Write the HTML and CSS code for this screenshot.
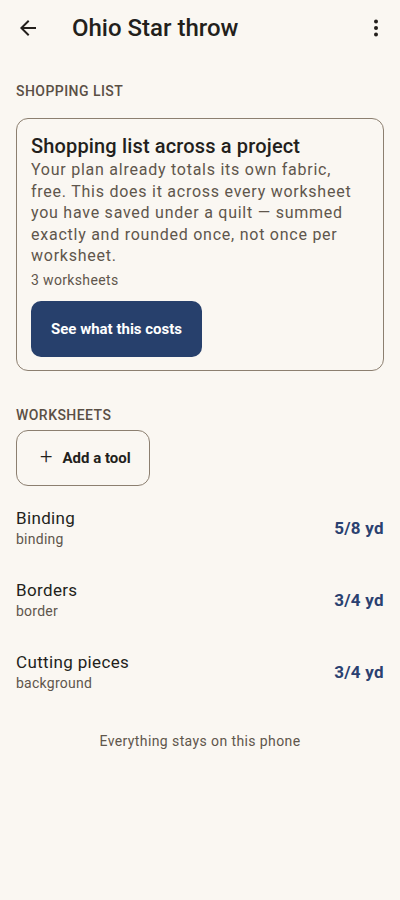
FILE: index.html
```html
<!DOCTYPE html>
<html lang="en">
<head>
<meta charset="utf-8">
<link rel="stylesheet" href="styles.css">
</head>
<body>
<div class="app">
  <header class="topbar">
    <button class="iconbtn" aria-label="Back">
      <svg width="24" height="24" viewBox="0 0 24 24"><path d="M20 11H7.83l5.59-5.59L12 4l-8 8 8 8 1.41-1.41L7.83 13H20v-2z" fill="#231f1c"/></svg>
    </button>
    <h1 class="title">Ohio Star throw</h1>
    <button class="iconbtn more" aria-label="More">
      <svg width="24" height="24" viewBox="0 0 24 24"><circle cx="12" cy="5.5" r="2" fill="#231f1c"/><circle cx="12" cy="12" r="2" fill="#231f1c"/><circle cx="12" cy="18.5" r="2" fill="#231f1c"/></svg>
    </button>
  </header>

  <main class="content">
    <h2 class="section">SHOPPING LIST</h2>
    <section class="card">
      <h3 class="card-title">Shopping list across a project</h3>
      <p class="card-body">Your plan already totals its own fabric, free. This does it across every worksheet you have saved under a quilt — summed exactly and rounded once, not once per worksheet.</p>
      <p class="card-meta">3 worksheets</p>
      <button class="primary">See what this costs</button>
    </section>

    <h2 class="section ws">WORKSHEETS</h2>
    <button class="outline"><span class="plus">+</span>Add a tool</button>

    <ul class="list">
      <li class="row"><div class="row-text"><span class="row-title">Binding</span><span class="row-sub">binding</span></div><span class="row-val">5/8 yd</span></li>
      <li class="row"><div class="row-text"><span class="row-title">Borders</span><span class="row-sub">border</span></div><span class="row-val">3/4 yd</span></li>
      <li class="row"><div class="row-text"><span class="row-title">Cutting pieces</span><span class="row-sub">background</span></div><span class="row-val">3/4 yd</span></li>
    </ul>

    <p class="footer">Everything stays on this phone</p>
  </main>
</div>
</body>
</html>
```

FILE: styles.css
```css
* { box-sizing: border-box; }
html, body { margin: 0; padding: 0; }
body {
  background: #faf7f2;
  font-family: Roboto, "Noto Sans", sans-serif;
  color: #231f1c;
  width: 400px;
  min-height: 900px;
}
button { font-family: inherit; cursor: pointer; }
.topbar {
  height: 56px;
  display: flex;
  align-items: center;
  padding: 0 0 0 4px;
}
.iconbtn {
  width: 48px; height: 48px;
  border: none; background: none;
  display: flex; align-items: center; justify-content: center;
  padding: 0;
}
.title {
  margin: 0 0 0 20px;
  font-size: 24px;
  font-weight: 500;
  flex: 1;
  letter-spacing: 0;
}
.content { padding: 0 16px; }
.section {
  margin: 0;
  font-size: 14px;
  font-weight: 500;
  color: #5a4f45;
  letter-spacing: 0.45px;
  line-height: 20px;
  padding-top: 25px;
  padding-bottom: 17px;
}
.section.ws { padding-top: 34px; padding-bottom: 5px; }
.card {
  border: 1px solid #8c7f70;
  border-radius: 12px;
  padding: 14px 15px 13px 14px;
}
.card-title {
  margin: 0;
  font-size: 20px;
  font-weight: 500;
  line-height: 26px;
  letter-spacing: 0.15px;
}
.card-body {
  margin: 0;
  font-size: 16px;
  line-height: 21.5px;
  color: #5f564c;
  letter-spacing: 0.75px;
}
.card-meta {
  margin: 3px 0 0;
  font-size: 14px;
  line-height: 20px;
  color: #5f564c;
  letter-spacing: 0.35px;
}
.primary {
  margin-top: 11px;
  height: 56px;
  padding: 0 20px;
  border: none;
  border-radius: 10px;
  background: #27406c;
  color: #fff;
  font-size: 15px;
  font-weight: 700;
  display: block;
}
.outline {
  height: 56px;
  padding: 0 18px 0 23px;
  border: 1px solid #8c7f70;
  border-radius: 12px;
  background: transparent;
  color: #231f1c;
  font-size: 15px;
  font-weight: 700;
  display: flex;
  align-items: center;
}
.plus {
  font-size: 22px;
  font-weight: 300;
  margin-right: 10px;
  line-height: 1;
  position: relative;
  top: -1px;
}
.list { list-style: none; margin: 6px 0 0; padding: 0; }
.row {
  height: 72px;
  display: flex;
  align-items: center;
  justify-content: space-between;
}
.row-text { display: flex; flex-direction: column; }
.row-title { font-size: 17px; line-height: 22px; letter-spacing: 0.35px; color: #231f1c; }
.row-sub { font-size: 14px; line-height: 20px; color: #5f564c; letter-spacing: 0.25px; }
.row-val { font-size: 17px; font-weight: 700; color: #2a4170; letter-spacing: 0.3px; }
.footer {
  text-align: center;
  font-size: 14px;
  line-height: 20px;
  color: #5f564c;
  margin: 23px 0 0;
  letter-spacing: 0.4px;
}
```
